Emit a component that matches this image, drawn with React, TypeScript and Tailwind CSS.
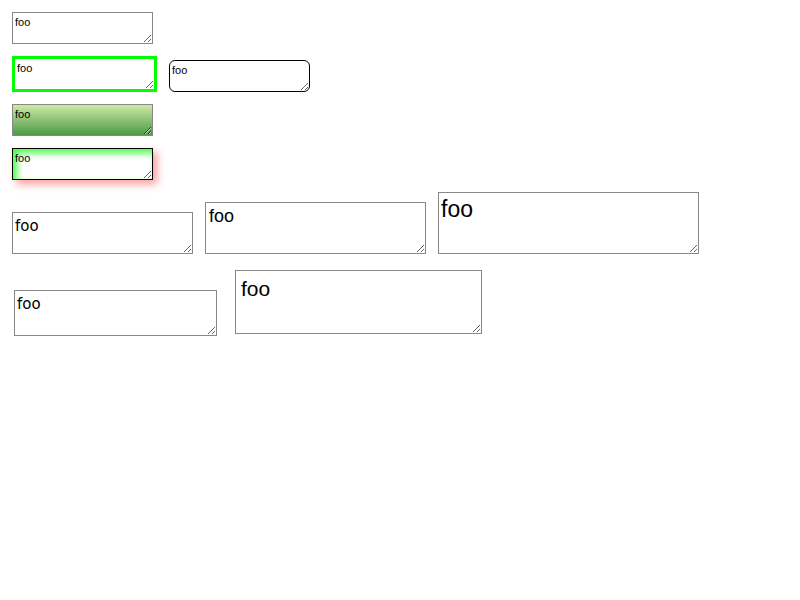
import React from "react";

const base =
  "block box-border bg-white text-black p-[2px] outline-none resize overflow-auto leading-tight";
const font = { fontFamily: '"Liberation Sans", Arial, sans-serif' };

export default function App() {
  return (
    <div className="p-3 flex flex-col items-start gap-3 bg-white min-h-[600px]" style={font}>
      <textarea
        readOnly
        defaultValue="foo"
        className={`${base} w-[141px] h-[32px] border border-[#888] text-[11px] pt-[3px]`}
      />
      <div className="flex items-end gap-3">
        <textarea
          readOnly
          defaultValue="foo"
          className={`${base} w-[145px] h-[36px] border-[3px] border-[#00ff00] text-[11px] pt-[3px]`}
        />
        <textarea
          readOnly
          defaultValue="foo"
          className={`${base} w-[141px] h-[32px] border border-black rounded-[6px] text-[11px] pt-[3px]`}
        />
      </div>
      <textarea
        readOnly
        defaultValue="foo"
        className={`${base} w-[141px] h-[32px] border border-[#888] text-[11px] pt-[3px] bg-[linear-gradient(to_bottom,#cde9a4,#4b9a48)]`}
      />
      <textarea
        readOnly
        defaultValue="foo"
        className={`${base} w-[141px] h-[32px] border border-black text-[11px] pt-[3px] shadow-[inset_4px_4px_7px_rgba(0,255,0,0.75),4px_4px_8px_rgba(255,0,0,0.4)]`}
      />
      <div className="flex items-end gap-3">
        <textarea
          readOnly
          defaultValue="foo"
          className={`${base} w-[181px] h-[42px] border border-[#888] text-[15px] pt-[4px]`}
          style={{ fontFamily: '"DejaVu Sans", sans-serif' }}
        />
        <textarea
          readOnly
          defaultValue="foo"
          className={`${base} w-[221px] h-[52px] border border-[#888] text-[18px] pl-[3px]`}
        />
        <textarea
          readOnly
          defaultValue="foo"
          className={`${base} w-[261px] h-[62px] border border-[#888] text-[23px]`}
        />
      </div>
      <div className="flex items-start mt-1">
        <textarea
          readOnly
          defaultValue="foo"
          className={`${base} mt-[20px] ml-[2px] w-[203px] h-[46px] border border-[#888] text-[15px] pt-[4px]`}
          style={{ fontFamily: '"DejaVu Sans", sans-serif' }}
        />
        <textarea
          readOnly
          defaultValue="foo"
          className={`${base} ml-[18px] w-[247px] h-[64px] border border-[#888] text-[21px] pl-[5px] pt-[5px]`}
        />
      </div>
    </div>
  );
}
